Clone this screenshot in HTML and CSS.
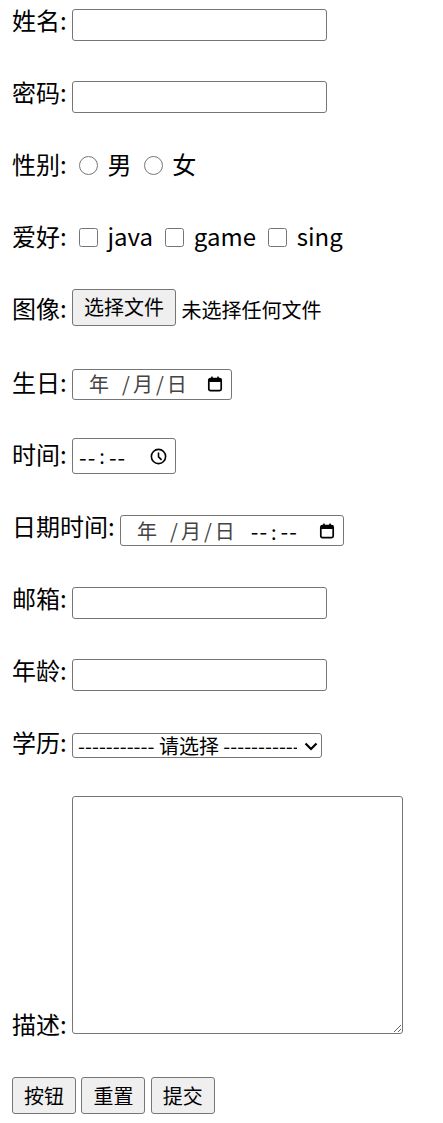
FILE: index.html
```html
<!DOCTYPE html>
<html lang="zh">
<head>
    <meta charset="UTF-8">
    <meta name="viewport" content="width=device-width, initial-scale=1.0">
    <title>注册</title>
    <link rel="stylesheet" href="styles.css">
</head>
<body>
    <form class="reg-form" action="#" method="get">
        姓名: <input type="text" class="field" name="username"><br><br>
        密码: <input type="password" class="field" name="password"><br><br>
        性别: <input type="radio" class="pick" name="gender" value="male" id="male"> <label for="male">男</label>
        <input type="radio" class="pick" name="gender" value="female" id="female"> <label for="female">女</label><br><br>
        爱好: <input type="checkbox" class="pick" name="hobby" value="java" id="java"> <label for="java">java</label>
        <input type="checkbox" class="pick" name="hobby" value="game" id="game"> <label for="game">game</label>
        <input type="checkbox" class="pick" name="hobby" value="sing" id="sing"> <label for="sing">sing</label><br><br>
        图像: <label class="file-pick"><input type="file" class="file-input" name="file"><span class="btn file-btn">选择文件</span></label> <span class="file-note">未选择任何文件</span><br><br>
        生日: <span class="picker date-picker">
            <span class="seg seg-year">年</span><span class="sep">/</span><span class="seg">月</span><span class="sep">/</span><span class="seg">日</span>
            <svg class="cal-icon" viewBox="0 0 16 16" width="16" height="16"><rect x="1.8" y="2.6" width="12.4" height="12" rx="1.6" fill="none" stroke="#000" stroke-width="1.7"/><rect x="1.8" y="2.6" width="12.4" height="3.4" rx="1" fill="#000"/><rect x="4.1" y="0.6" width="1.7" height="2.6" fill="#000"/><rect x="10.2" y="0.6" width="1.7" height="2.6" fill="#000"/></svg>
        </span><br><br>
        时间: <span class="picker time-picker">
            <span class="dash">--</span><span class="colon">:</span><span class="dash">--</span>
            <svg class="clock-icon" viewBox="0 0 16 16" width="17" height="17"><circle cx="8" cy="8" r="6.7" fill="none" stroke="#000" stroke-width="1.5"/><path d="M8 4.2V8.4L10.9 11.2" fill="none" stroke="#000" stroke-width="1.5"/></svg>
        </span><br><br>
        日期时间: <span class="picker datetime-picker">
            <span class="seg seg-year">年</span><span class="sep">/</span><span class="seg">月</span><span class="sep">/</span><span class="seg">日</span>
            <span class="time-part"><span class="dash">--</span><span class="colon">:</span><span class="dash">--</span></span>
            <svg class="cal-icon" viewBox="0 0 16 16" width="16" height="16"><rect x="1.8" y="2.6" width="12.4" height="12" rx="1.6" fill="none" stroke="#000" stroke-width="1.7"/><rect x="1.8" y="2.6" width="12.4" height="3.4" rx="1" fill="#000"/><rect x="4.1" y="0.6" width="1.7" height="2.6" fill="#000"/><rect x="10.2" y="0.6" width="1.7" height="2.6" fill="#000"/></svg>
        </span><br><br>
        邮箱: <input type="email" class="field" name="email"><br><br>
        年龄: <input type="number" class="field" name="age"><br><br>
        学历: <span class="edu-wrap"><select name="edu" class="edu">
            <option value="">----------- 请选择 -----------</option>
            <option value="1">大专</option>
            <option value="2">本科</option>
            <option value="3">研究生</option>
        </select><svg class="chevron" viewBox="0 0 14 9" width="14" height="9"><path d="M1.5 1.5L7 7L12.5 1.5" fill="none" stroke="#000" stroke-width="2.2"/></svg></span><br><br>
        描述: <textarea name="des" class="des"></textarea><br><br>
        <input type="button" class="btn" value="按钮">
        <input type="reset" class="btn" value="重置">
        <input type="submit" class="btn" value="提交">
    </form>
</body>
</html>
```

FILE: styles.css
```css
body {
    margin: 0;
    font-family: "Noto Sans CJK SC", "Noto Sans", sans-serif;
    color: #000000;
    background: #FFFFFF;
}

.reg-form {
    margin: 2px 12px 12px;
    font-size: 24px;
    line-height: 36px;
}

.field,
.edu,
.des,
.btn,
.picker {
    box-sizing: border-box;
    font-family: "Noto Sans CJK SC", "Noto Sans", sans-serif;
    font-size: 20px;
    border: 1px solid #767676;
    border-radius: 3px;
    background: #FFFFFF;
    color: #000000;
    margin: 0;
}

.field {
    width: 255px;
    height: 32px;
    padding: 1px 3px;
    margin: -4px 0;
    vertical-align: -3.5px;
}

.pick {
    width: 19px;
    height: 19px;
    margin: 0 4px 0 7px;
    vertical-align: -1px;
}

.file-pick {
    position: relative;
}

.file-input {
    position: absolute;
    width: 1px;
    height: 1px;
    opacity: 0;
}

.btn {
    display: inline-block;
    width: 64px;
    height: 37px;
    padding: 0;
    line-height: 33px;
    text-align: center;
    background: #EFEFEF;
    margin: -4px 0;
    vertical-align: 2px;
}

.file-btn {
    width: 104px;
    vertical-align: 3.5px;
}

.file-note {
    font-size: 20px;
}

.picker {
    display: inline-flex;
    align-items: center;
    height: 31px;
    padding: 0 8px 0 16px;
    margin: -4px 0;
    line-height: 1;
}

.seg {
    color: #444444;
}

.sep {
    color: #444444;
    margin: 0 3px;
}

.seg-year {
    margin-right: 10px;
}

.dash {
    letter-spacing: 1px;
    font-size: 22px;
}

.colon {
    margin: 0 4px 0 3px;
}

.date-picker {
    width: 160px;
    vertical-align: 0;
}

.cal-icon {
    margin-left: auto;
}

.time-picker {
    width: 104px;
    height: 36px;
    padding-left: 6px;
    margin: -8px 0;
    vertical-align: -2px;
}

.clock-icon {
    margin-left: auto;
}

.datetime-picker {
    width: 224px;
    vertical-align: -2.5px;
}

.time-part {
    margin-left: 16px;
}

.edu-wrap {
    position: relative;
}

.edu {
    width: 250px;
    height: 25px;
    padding: 0 24px 0 5px;
    line-height: 23px;
    appearance: none;
    margin: -4px 0;
    vertical-align: -2px;
}

.chevron {
    position: absolute;
    right: 4px;
    top: 50%;
    margin-top: 0;
    pointer-events: none;
}

.des {
    width: 331px;
    height: 238px;
    resize: both;
    vertical-align: 0;
}
```
